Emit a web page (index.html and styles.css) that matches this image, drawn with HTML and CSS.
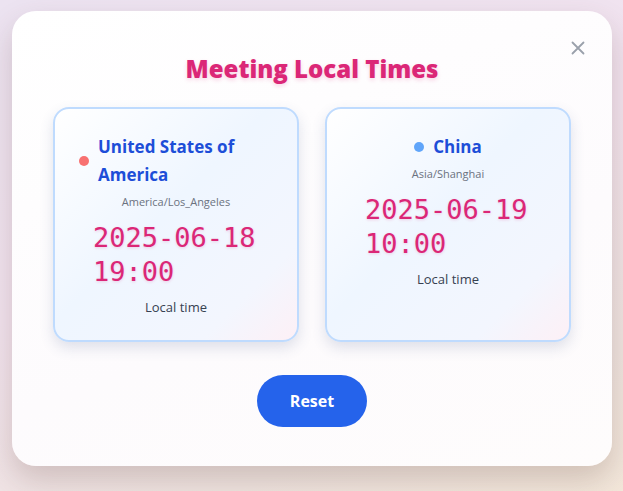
FILE: index.html
```
<!DOCTYPE html>
<html>
<head>
<meta charset="utf-8">
<link rel="stylesheet" href="styles.css">
</head>
<body>
<div class="modal">
  <button class="close" aria-label="Close">
    <svg width="14" height="14" viewBox="0 0 14 14"><path d="M1.5 1.5 L12.5 12.5 M12.5 1.5 L1.5 12.5" stroke="#9aa0ab" stroke-width="1.8" stroke-linecap="round"/></svg>
  </button>
  <h1 class="title">Meeting Local Times</h1>
  <div class="cards">
    <div class="card">
      <div class="head"><span class="dot dot-red"></span><span class="name">United States of America</span></div>
      <div class="tz">America/Los_Angeles</div>
      <div class="time">2025-06-18 19:00</div>
      <div class="label">Local time</div>
    </div>
    <div class="card">
      <div class="head"><span class="dot dot-blue"></span><span class="name">China</span></div>
      <div class="tz">Asia/Shanghai</div>
      <div class="time">2025-06-19 10:00</div>
      <div class="label">Local time</div>
    </div>
  </div>
  <div class="actions"><button class="reset">Reset</button></div>
</div>
</body>
</html>
```
FILE: styles.css
```
* { box-sizing: border-box; }
html, body { margin: 0; height: 100%; }
body {
  width: 623px; height: 491px; overflow: hidden;
  background: linear-gradient(160deg, #ece3f1 0%, #f2e3ef 45%, #efe4e0 80%, #f3e7da 100%);
  font-family: "Open Sans", "Noto Sans", sans-serif;
  padding: 11px 11px 0 12px;
}
.modal {
  position: relative;
  width: 600px; height: 455px;
  background: linear-gradient(160deg, #ffffff 0%, #fdfbfd 60%, #fefcfc 100%);
  border-radius: 24px;
  box-shadow: 0 14px 30px rgba(90, 60, 50, 0.22);
  padding: 42px 41px 0 41px;
  display: flex; flex-direction: column;
}
.close {
  position: absolute; top: 30px; right: 27px;
  background: none; border: 0; padding: 0; width: 14px; height: 14px; display: flex;
}
.title {
  margin: 0; text-align: center;
  font-size: 24px; line-height: 32px; font-weight: 800;
  color: #db2777;
  text-shadow: 0 2px 4px rgba(219, 39, 119, 0.2);
}
.cards {
  margin-top: 22px;
  display: grid; grid-template-columns: 246px 246px; column-gap: 26px;
}
.card {
  height: 235px;
  border: 2px solid #bfdbfe;
  border-radius: 16px;
  background: linear-gradient(135deg, #ffffff 0%, #eff6ff 45%, #f3f6fe 80%, #fdf0f6 100%);
  box-shadow: 0 6px 14px rgba(60, 80, 130, 0.16);
  padding: 24px 24px;
  display: flex; flex-direction: column; align-items: center;
}
.head {
  display: flex; align-items: center; gap: 9px;
}
.dot { width: 10px; height: 10px; border-radius: 50%; flex: none; }
.dot-red { background: #f87171; }
.dot-blue { background: #60a5fa; }
.name {
  font-size: 17px; line-height: 28px; font-weight: 700; color: #1d4ed8;
}
.tz {
  margin-top: 5px;
  font-size: 11px; line-height: 16px; color: #6b7280;
}
.time {
  margin-top: 11px;
  width: 166px;
  font-family: "DejaVu Sans Mono", monospace;
  font-size: 27px; line-height: 34px; color: #db2777;
  text-shadow: 0 1px 3px rgba(219, 39, 119, 0.2);
}
.label {
  margin-top: 8px;
  font-size: 13px; line-height: 20px; color: #374151;
}
.actions { margin-top: 33px; display: flex; justify-content: center; }
.reset {
  width: 110px; height: 52px; border-radius: 26px; border: 0;
  background: #2563eb; color: #fff;
  font-family: "Open Sans", sans-serif; font-size: 16px; font-weight: 700;
}
```
